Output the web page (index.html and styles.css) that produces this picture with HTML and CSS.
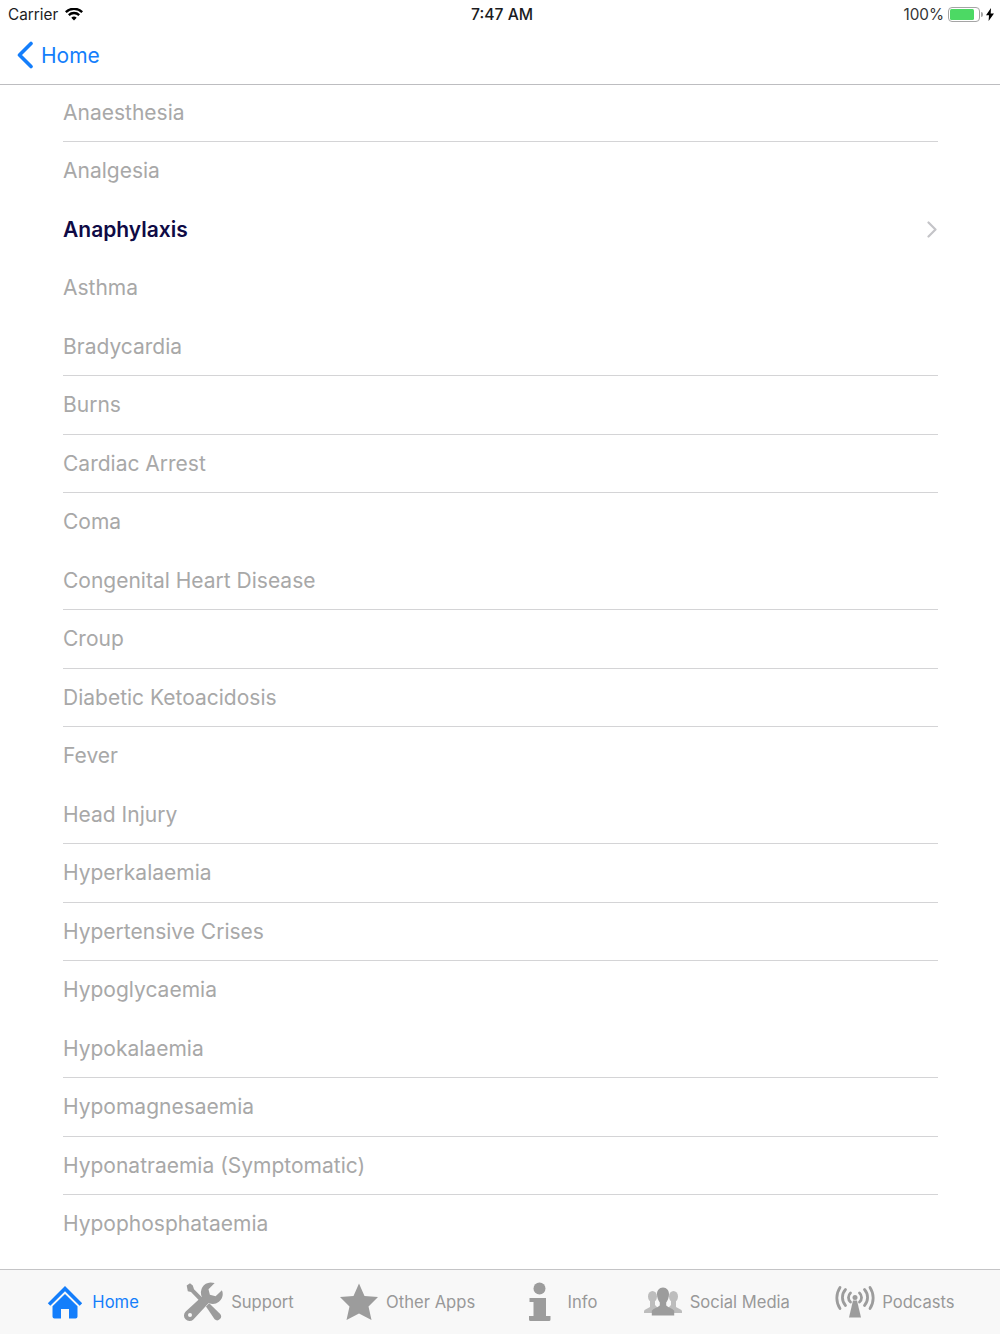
FILE: index.html
```html
<!DOCTYPE html>
<html lang="en">
<head>
<meta charset="utf-8">
<title>Home</title>
<link rel="stylesheet" href="styles.css">
</head>
<body>
<div class="app">
  <header class="top">
    <div class="status">
      <div class="status-left">
        <span>Carrier</span>
        <svg class="wifi" viewBox="0 0 18 13"><path d="M9 12.600 6.300 9.700a3.900 3.900 0 0 1 5.400 0zM4.600 8 3 6.300a8.600 8.600 0 0 1 12 0L13.400 8a6.200 6.200 0 0 0-8.800 0zM1.600 5 0 3.300a12.800 12.800 0 0 1 18 0L16.400 5A10.600 10.600 0 0 0 1.600 5z"/></svg>
      </div>
      <div class="status-time">7:47 AM</div>
      <div class="status-right">
        <span>100%</span>
        <span class="battery"><span class="battery-fill"></span></span>
        <span class="battery-cap"></span>
        <svg class="bolt" viewBox="0 0 8 13"><path d="M5 0 0 7.300h3L2.600 13 8 5.400H4.700z"/></svg>
      </div>
    </div>
    <nav class="nav">
      <svg class="back" viewBox="0 0 18 28"><path d="M15 2.500 3.500 14 15 25.500"/></svg>
      <span>Home</span>
    </nav>
  </header>

  <main class="list">
    <div class="row sep">Anaesthesia</div>
    <div class="row">Analgesia</div>
    <div class="row active">Anaphylaxis<svg class="chev" viewBox="0 0 11 17"><path d="M1.500 1.500 8.500 8.500 1.500 15.500"/></svg></div>
    <div class="row">Asthma</div>
    <div class="row sep">Bradycardia</div>
    <div class="row sep">Burns</div>
    <div class="row sep">Cardiac Arrest</div>
    <div class="row">Coma</div>
    <div class="row sep">Congenital Heart Disease</div>
    <div class="row sep">Croup</div>
    <div class="row sep">Diabetic Ketoacidosis</div>
    <div class="row">Fever</div>
    <div class="row sep">Head Injury</div>
    <div class="row sep">Hyperkalaemia</div>
    <div class="row sep">Hypertensive Crises</div>
    <div class="row">Hypoglycaemia</div>
    <div class="row sep">Hypokalaemia</div>
    <div class="row sep">Hypomagnesaemia</div>
    <div class="row sep">Hyponatraemia (Symptomatic)</div>
    <div class="row">Hypophosphataemia</div>
  </main>

  <footer class="tabs">
    <div class="tab on">
      <svg class="ico" viewBox="0 0 40 40"><path d="M20 4 2.800 21.200l2.500 2.500L20 9.200l14.700 14.500 2.500-2.500z"/><path d="M7.500 24.200 20 12l12.500 12.200V34.500a2 2 0 0 1-2 2H24V27h-8v9.500H9.500a2 2 0 0 1-2-2z"/></svg>
      <span>Home</span>
    </div>
    <div class="tab">
      <svg class="ico" viewBox="0 0 40 40"><path d="M26.500 0.500a10 10 0 0 0-8.700 14.200L1.700 29.500a5.500 5.500 0 0 0 7.700 8l15.300-16.400A10 10 0 0 0 38.500 10l-.6-1.800-6.300 6-5.700-1.500-1.400-5.500 6.200-6.200z"/><path d="M2.700 3.500 6 1.200l2.800 2.300 1.200 3.800 8.200 8.300-3 3L7 10 3.800 9.200z"/><path d="M22 24.500l3.200-3.200 11 10.600a4 4 0 0 1-.3 5.200 4 4 0 0 1-5.300.2z"/><circle class="hole" cx="6" cy="33" r="2"/></svg>
      <span>Support</span>
    </div>
    <div class="tab">
      <svg class="ico" viewBox="0 0 40 40"><path d="M20 1.500 25.500 14 39 15l-9.500 9.500L32.500 38 20 31.500 7.500 38l3-13.500L1 15l13.500-1z"/></svg>
      <span>Other Apps</span>
    </div>
    <div class="tab">
      <svg class="ico" viewBox="0 0 40 40"><circle cx="19.500" cy="6.500" r="6"/><path d="M9.500 16H26v18h4.500v3.500A1.500 1.500 0 0 1 29 39H10.500A1.500 1.500 0 0 1 9 37.500V34h4.500V20h-4z"/></svg>
      <span>Info</span>
    </div>
    <div class="tab">
      <svg class="ico" viewBox="0 0 40 40"><ellipse class="soft" cx="9.500" cy="14.500" rx="4.500" ry="5.500"/><ellipse class="soft" cx="30.500" cy="14.500" rx="4.500" ry="5.500"/><path class="soft" d="M7 19h5v4l3 3v5H1v-1.500l.500-1.500 5.500-3zM33 19h-5v4l-3 3v5h14v-1.500l-.500-1.500-5.500-3z"/><path d="M20 5.500c3.800 0 6 3 6 6.500 0 3.500-1.200 6.500-2.800 8.500v2.800c1 2 6.300 3 8 5.500v4.700H8.800v-4.700c1.700-2.500 7-3.500 8-5.500v-2.800C15.200 18.500 14 15.500 14 12c0-3.500 2.200-6.500 6-6.500z"/></svg>
      <span>Social Media</span>
    </div>
    <div class="tab">
      <svg class="ico" viewBox="0 0 40 40"><path d="M18 18.500h4l4 17H14z"/><circle cx="20" cy="15.500" r="2.500"/><g class="arcs"><path d="M15.500 11a6 6 0 0 0 0 9"/><path d="M24.500 11a6 6 0 0 1 0 9"/><path d="M10.500 7.500a12 12 0 0 0 0 16"/><path d="M29.500 7.500a12 12 0 0 1 0 16"/><path d="M5 5.500a19 19 0 0 0 0 21"/><path d="M35 5.500a19 19 0 0 1 0 21"/></g></svg>
      <span>Podcasts</span>
    </div>
  </footer>
</div>
</body>
</html>
```
FILE: styles.css
```css
* { box-sizing: border-box; }
html, body { margin: 0; padding: 0; background: #fff; }
body { font-family: Inter, "Liberation Sans", sans-serif; }
.app { width: 1000px; height: 1334px; display: flex; flex-direction: column; overflow: hidden; }

.top { height: 85px; border-bottom: 1px solid #bdbdc0; flex: none; }
.status { height: 28px; display: flex; justify-content: space-between; align-items: center; padding: 0 6px 0 8px; font-size: 15.300px; color: #1c1c1e; position: relative; }
.status-left, .status-right { display: flex; align-items: center; }
.wifi { width: 18px; height: 13px; margin-left: 7px; fill: #000; }
.status-time { font-size: 15.700px; font-weight: 500; position: absolute; left: 471px; top: 5px; }
.status-right span:first-child { color: #333; margin-right: 4px; }
.battery { width: 32px; height: 15px; border: 1.500px solid #a5a5a5; border-radius: 4px; padding: 1px; display: block; }
.battery-fill { display: block; height: 100%; background: #4cd964; border-radius: 1.500px; }
.battery-cap { width: 2px; height: 5px; background: #a5a5a5; margin-left: 1px; border-radius: 0 2px 2px 0; }
.bolt { width: 8px; height: 13px; margin-left: 3px; fill: #000; }

.nav { height: 56px; display: flex; align-items: center; padding: 0 0 2px 16px; color: #147efb; font-size: 21px; }
.back { width: 18px; height: 28px; margin-right: 7px; fill: none; stroke: #147efb; stroke-width: 3.600; stroke-linecap: round; stroke-linejoin: round; }

.list { flex: 1; margin-top: -1.500px; padding-left: 63px; padding-right: 62px; }
.row { height: 58.500px; display: flex; align-items: center; justify-content: space-between; font-size: 21px; color: #a8a8a8; border-bottom: 1px solid transparent; }
.row.sep { border-bottom-color: #d4d4d6; }
.row.active { color: #0f0a45; font-weight: 600; }
.chev { width: 11px; height: 17px; fill: none; stroke: #c4c4c8; stroke-width: 2.200; stroke-linecap: round; stroke-linejoin: round; }

.tabs { height: 65px; flex: none; background: #f8f8f8; border-top: 1px solid #c4c4c6; display: flex; justify-content: space-evenly; align-items: center; font-size: 16.600px; color: #999; }
.tab { display: flex; align-items: center; gap: 7px; }
.tab.on { color: #147efb; }
.ico { width: 40px; height: 40px; fill: #9c9c9c; }
.tab.on .ico { fill: #147efb; }
.hole { fill: #f8f8f8; }
.soft { fill: #bdbdbd; }
.arcs { fill: none; stroke: #9c9c9c; stroke-width: 2.800; stroke-linecap: round; }
```
